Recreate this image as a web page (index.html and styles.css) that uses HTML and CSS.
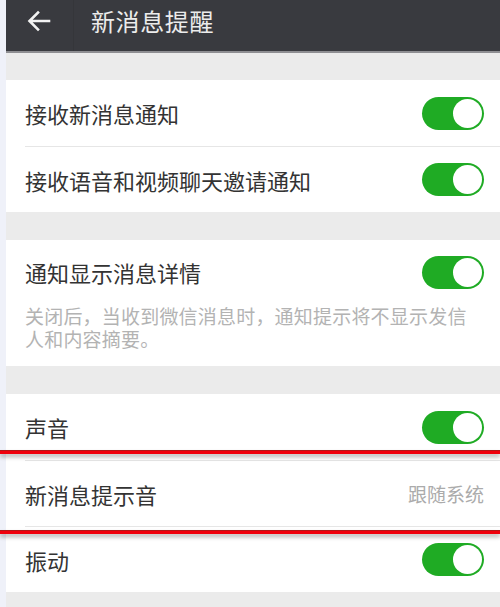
FILE: index.html
```html
<!DOCTYPE html>
<html lang="zh-CN">
<head>
<meta charset="utf-8">
<title>新消息提醒</title>
<link rel="stylesheet" href="styles.css">
</head>
<body>
<div class="page">
  <header class="topbar">
    <svg class="back" width="24" height="22" viewBox="0 0 24 22" aria-hidden="true">
      <path d="M22 11H3M11 2.5L2.5 11L11 19.5" fill="none" stroke="#f2f2f2" stroke-width="2.6" stroke-linecap="square"/>
    </svg>
    <span class="sep"></span>
    <h1 class="title">新消息提醒</h1>
  </header>

  <div class="gap first"></div>

  <section class="group">
    <div class="row">
      <span class="label">接收新消息通知</span>
      <span class="switch"></span>
    </div>
    <div class="row">
      <span class="label">接收语音和视频聊天邀请通知</span>
      <span class="switch"></span>
    </div>
  </section>

  <div class="gap"></div>

  <section class="group">
    <div class="row detail">
      <span class="label">通知显示消息详情</span>
      <span class="switch"></span>
    </div>
    <p class="desc">关闭后，当收到微信消息时，通知提示将不显示发信人和内容摘要。</p>
  </section>

  <div class="gap"></div>

  <section class="group marked">
    <div class="row">
      <span class="label">声音</span>
      <span class="switch"></span>
    </div>
    <div class="row">
      <span class="label">新消息提示音</span>
      <span class="value">跟随系统</span>
    </div>
    <div class="row">
      <span class="label">振动</span>
      <span class="switch"></span>
    </div>
    <span class="redline one"></span>
    <span class="redline two"></span>
  </section>

  <div class="gap last"></div>
</div>
</body>
</html>
```
FILE: styles.css
```css
html, body {
  margin: 0;
  padding: 0;
}
body {
  width: 500px;
  height: 607px;
  overflow: hidden;
  background: #eff1f9;
  font-family: "Noto Sans CJK SC", "Noto Sans", sans-serif;
}
.page {
  margin-left: 6px;
  background: #ebebeb;
  height: 607px;
}
.topbar {
  height: 51px;
  background: #393a3f;
  border-bottom: 2px solid #8e8e92;
  display: flex;
  align-items: center;
  box-sizing: content-box;
}
.back {
  margin-left: 21px;
  margin-top: -9px;
}
.sep {
  width: 1px;
  height: 51px;
  background: #35363a;
  margin-left: 22px;
}
.title {
  margin: -10px 0 0 17px;
  font-size: 24px;
  font-weight: 400;
  color: #ececec;
  letter-spacing: 0.6px;
}
.gap {
  height: 28px;
}
.gap.first {
  height: 27px;
}
.group {
  background: #fff;
  padding-left: 19px;
  position: relative;
}
.row {
  height: 66px;
  display: flex;
  align-items: center;
  justify-content: space-between;
  padding-right: 16px;
  border-top: 1px solid #e6e6e6;
  box-sizing: border-box;
}
.row:first-child {
  border-top: none;
}
.label {
  font-size: 22px;
  color: #333;
}
.value {
  font-size: 19px;
  color: #ababab;
}
.switch {
  width: 62px;
  height: 33px;
  border-radius: 17px;
  background: #1fab24;
  position: relative;
  flex: none;
}
.switch::after {
  content: "";
  position: absolute;
  right: 2px;
  top: 2px;
  width: 29px;
  height: 29px;
  border-radius: 50%;
  background: #fff;
}
.row.detail {
  height: 64px;
}
.desc {
  margin: 0;
  padding: 0 20px 16px 0;
  font-size: 19px;
  line-height: 23px;
  color: #b3b3b3;
  letter-spacing: 0.2px;
}
.redline {
  position: absolute;
  left: -6px;
  width: 500px;
  height: 3px;
  background: #f0000c;
  border-top: 1px solid #b01818;
  box-shadow: 0 3px 4px rgba(0, 0, 0, 0.3);
}
.redline.one {
  top: 56px;
}
.redline.two {
  top: 136px;
}
.gap.last {
  height: 15px;
}
```
